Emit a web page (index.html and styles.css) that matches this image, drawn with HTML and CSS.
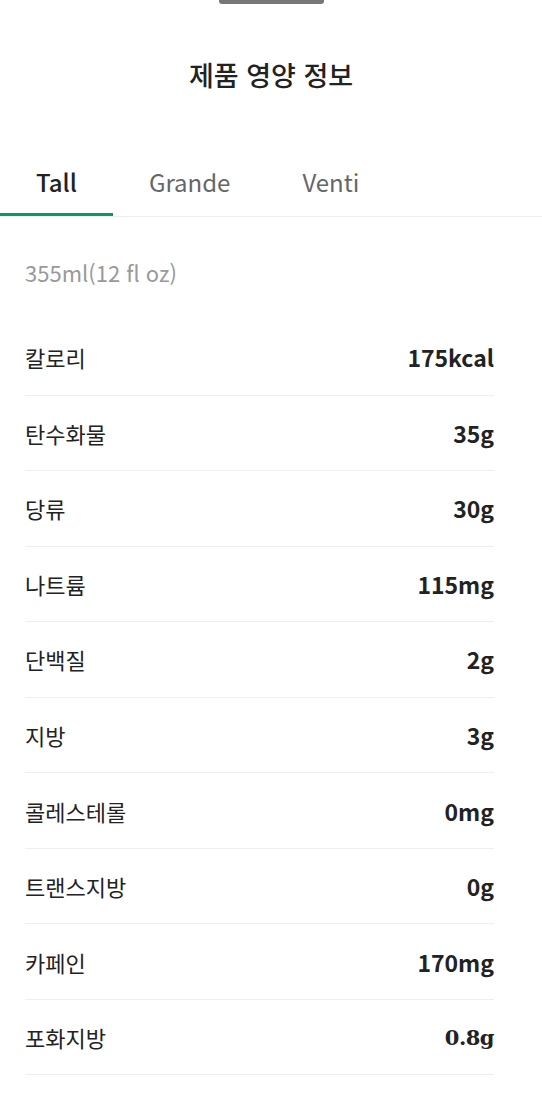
FILE: index.html
```html
<!DOCTYPE html>
<html lang="ko">
<head>
<meta charset="utf-8">
<link rel="stylesheet" href="styles.css">
</head>
<body>
<div class="sheet">
  <div class="handle"></div>
  <h1 class="title">제품 영양 정보</h1>
  <div class="tabs">
    <div class="tab active">Tall</div>
    <div class="tab">Grande</div>
    <div class="tab">Venti</div>
  </div>
  <div class="volume">355ml(12 fl oz)</div>
  <ul class="list">
    <li class="row"><span class="label">칼로리</span><span class="value">175kcal</span></li>
    <li class="row"><span class="label">탄수화물</span><span class="value">35g</span></li>
    <li class="row"><span class="label">당류</span><span class="value">30g</span></li>
    <li class="row"><span class="label">나트륨</span><span class="value">115mg</span></li>
    <li class="row"><span class="label">단백질</span><span class="value">2g</span></li>
    <li class="row"><span class="label">지방</span><span class="value">3g</span></li>
    <li class="row"><span class="label">콜레스테롤</span><span class="value">0mg</span></li>
    <li class="row"><span class="label">트랜스지방</span><span class="value">0g</span></li>
    <li class="row"><span class="label">카페인</span><span class="value">170mg</span></li>
    <li class="row"><span class="label">포화지방</span><span class="value serif">0.8g</span></li>
  </ul>
</div>
</body>
</html>
```

FILE: styles.css
```css
* { box-sizing: border-box; }
html, body {
  margin: 0;
  padding: 0;
  background: #fff;
}
body {
  font-family: "Noto Sans CJK KR", "Noto Sans", sans-serif;
  color: #222;
}
.sheet {
  display: flex;
  flex-direction: column;
}
.handle {
  width: 105px;
  height: 4px;
  margin: 0 auto;
  background: #777;
  border-radius: 0 0 3px 3px;
}
.title {
  margin: 53px 0 0;
  font-size: 27px;
  line-height: 36px;
  font-weight: 500;
  text-align: center;
  color: #222;
}
.tabs {
  display: flex;
  margin-top: 73px;
  border-bottom: 1px solid #eee;
}
.tab {
  padding: 0 36px 16px;
  font-size: 24px;
  line-height: 31px;
  color: #666;
  border-bottom: 3px solid transparent;
}
.tab.active {
  color: #222;
  font-weight: 500;
  border-bottom-color: #079b62;
}
.volume {
  margin-top: 40px;
  padding-left: 25px;
  font-size: 22px;
  line-height: 30px;
  color: #999;
}
.list {
  list-style: none;
  margin: 33px 0 0;
  padding: 0 48px 0 25px;
}
.row {
  display: flex;
  align-items: center;
  justify-content: space-between;
  height: 75.56px;
  border-bottom: 1px solid #eee;
}
.label {
  font-size: 22px;
  color: #222;
}
.value {
  font-size: 23px;
  font-weight: 700;
  color: #222;
}
.value.serif {
  font-family: "DejaVu Serif", serif;
  font-size: 21px;
  letter-spacing: -0.5px;
}
```
